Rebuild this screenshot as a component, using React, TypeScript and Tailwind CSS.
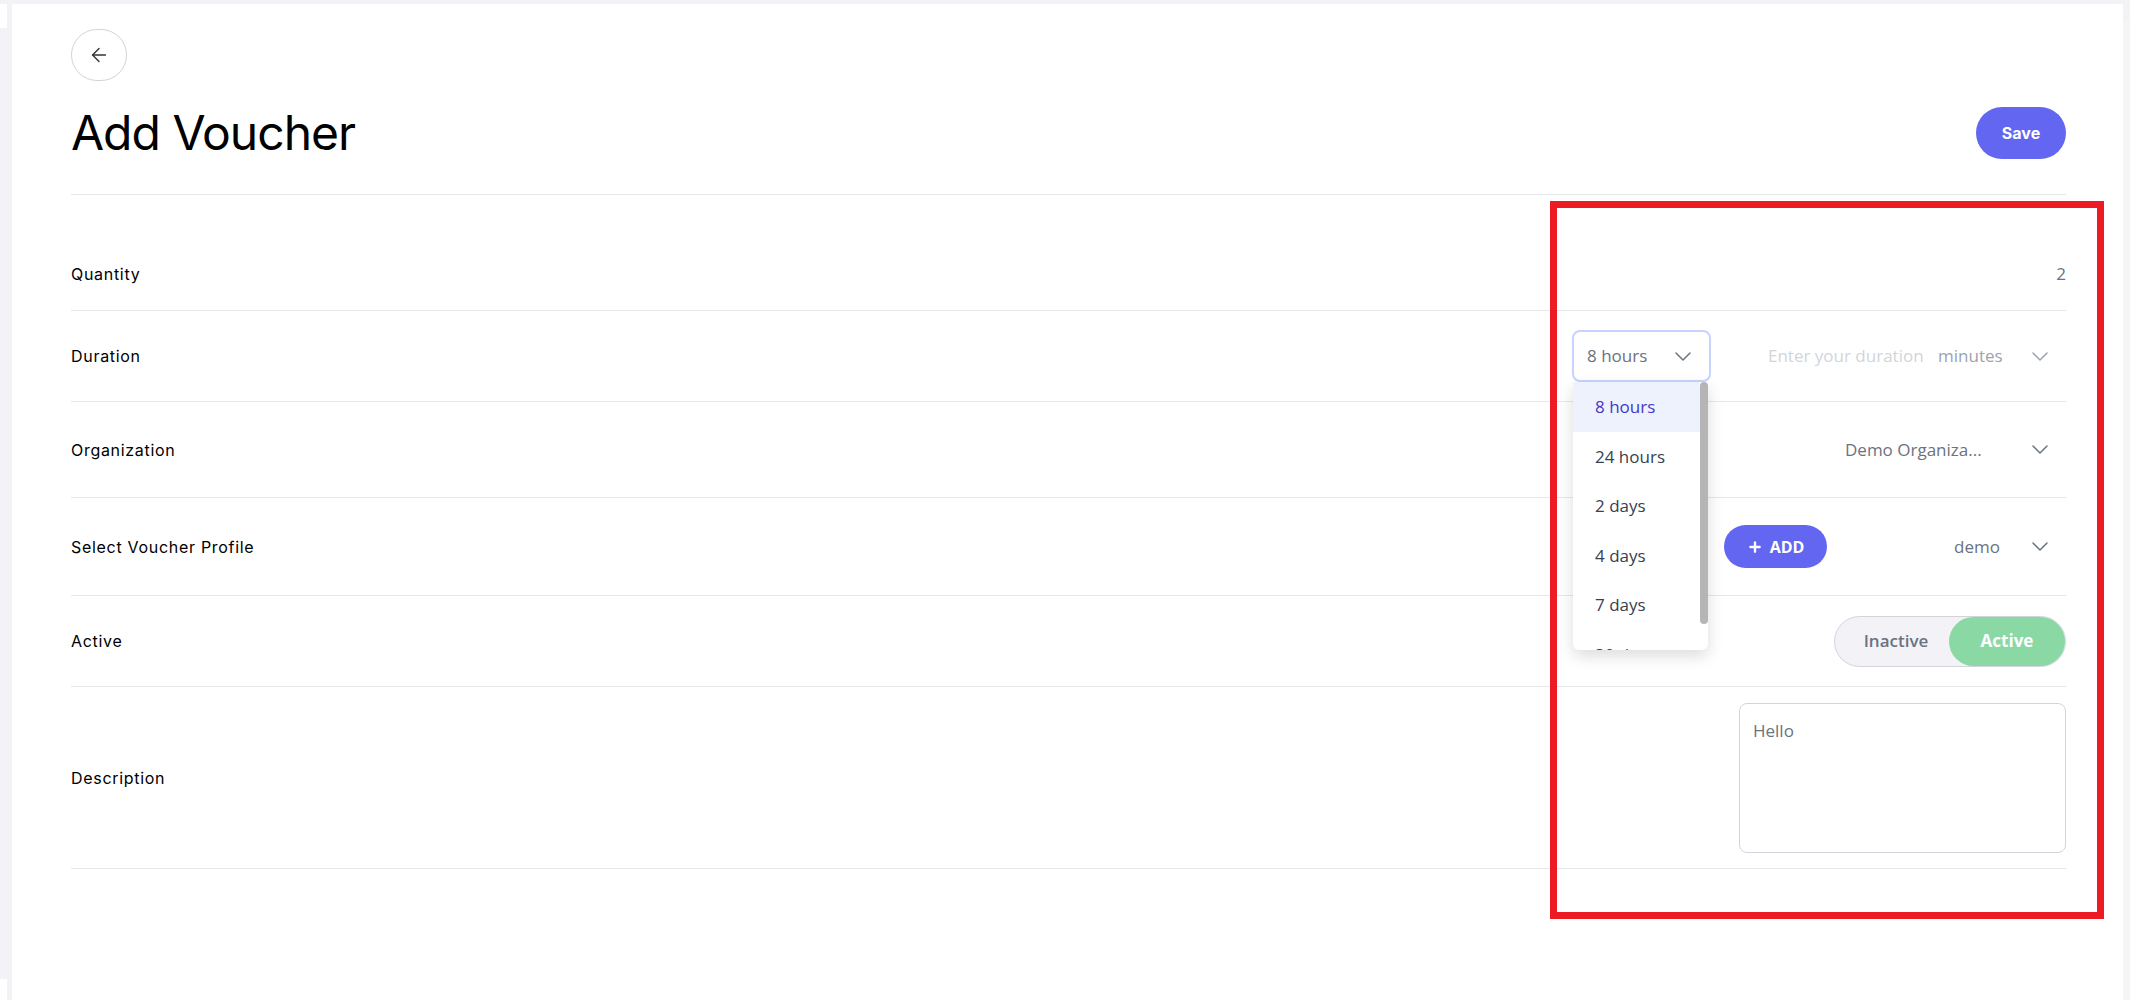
import React from "react";
import { ArrowLeft, Plus } from "lucide-react";

const Chevron = ({ className = "" }: { className?: string }) => (
  <svg width="16" height="9" viewBox="0 0 16 9" fill="none" className={className}>
    <path d="M1 1l7 7 7-7" stroke="currentColor" strokeWidth="1.5" strokeLinecap="round" strokeLinejoin="round" />
  </svg>
);

const options = ["8 hours", "24 hours", "2 days", "4 days", "7 days", "30 days"];

const Row = ({ label, height, children }: { label: string; height: string; children: React.ReactNode }) => (
  <div className={`flex items-center justify-between border-b border-[#e5e7eb] ${height}`}>
    <span className="font-['Inter',sans-serif] text-[16px] font-normal tracking-[0.7px] text-black">{label}</span>
    {children}
  </div>
);

const App = () => {
  return (
    <div className="relative flex h-[1000px] w-[2130px] overflow-hidden bg-[#f2f2f7] font-['Inter',sans-serif]">
      <div className="flex w-[12px] flex-col pt-[4px]">
        <div className="h-[24px] w-[7px] bg-white"></div>
        <div className="flex-1"></div>
        <div className="h-[21px] w-[7px] bg-white"></div>
      </div>

      <main className="mt-[4px] flex-1 bg-white pl-[59px] pr-[57px] pt-[25px]">
        <button className="flex h-[52px] w-[56px] items-center justify-center rounded-full border border-[#d4d4d8] text-[#333]">
          <ArrowLeft size={22} strokeWidth={1.5} />
        </button>

        <div className="mt-[26px] flex h-[52px] items-center justify-between">
          <h1 className="text-[48px] font-normal leading-none tracking-[-1px] text-black">Add Voucher</h1>
          <button className="h-[52px] w-[90px] rounded-full bg-[#6366f1] text-[16px] font-bold text-white">Save</button>
        </div>
        <div className="mt-[35px] h-px bg-[#e5e7eb]"></div>

        <div className="mt-[43px] font-['Open_Sans',sans-serif]">
          <Row label="Quantity" height="h-[73px]">
            <span className="text-[17px] text-[#6b7280]">2</span>
          </Row>

          <Row label="Duration" height="h-[91px]">
            <div className="flex items-center">
              <div className="relative flex h-[52px] w-[139px] items-center justify-between rounded-[8px] border-2 border-[#c7d2fe] pl-[13px] pr-[18px]">
                <span className="text-[17px] text-[#6b7280]">8 hours</span>
                <Chevron className="text-[#6b7280]" />
                <div className="absolute left-[-1px] top-[50px] z-10 flex h-[268px] w-[135px] overflow-hidden rounded-b-[6px] bg-white shadow-[0_6px_16px_rgba(0,0,0,0.14)]">
                  <ul className="w-[127px]">
                    {options.map((o, i) => (
                      <li
                        key={o}
                        className={`flex h-[49.5px] items-center pl-[22px] text-[17px] ${
                          i === 0 ? "bg-[#eef2fd] text-[#4338ca]" : "text-[#374151]"
                        }`}
                      >
                        {o}
                      </li>
                    ))}
                  </ul>
                  <div className="w-[8px]">
                    <div className="h-[242px] w-[8px] rounded-full bg-[#b5b5b5]"></div>
                  </div>
                </div>
              </div>
              <span className="ml-[57px] w-[157px] whitespace-nowrap text-[17px] text-[#d1d5db]">Enter your duration</span>
              <span className="ml-[13px] w-[65px] whitespace-nowrap text-[17px] text-[#9ca3af]">minutes</span>
              <Chevron className="ml-[29px] mr-[18px] text-[#9ca3af]" />
            </div>
          </Row>

          <Row label="Organization" height="h-[96px]">
            <div className="flex items-center">
              <span className="w-[152px] whitespace-nowrap text-[17px] text-[#6b7280]">Demo Organiza...</span>
              <Chevron className="ml-[35px] mr-[18px] text-[#6b7280]" />
            </div>
          </Row>

          <Row label="Select Voucher Profile" height="h-[98px]">
            <div className="flex items-center">
              <button className="flex h-[43px] w-[103px] items-center justify-center gap-[7px] rounded-full bg-[#6366f1] text-[16px] font-bold text-white">
                <Plus size={16} strokeWidth={3.5} />
                <span>ADD</span>
              </button>
              <span className="ml-[127px] w-[52px] text-[17px] text-[#6b7280]">demo</span>
              <Chevron className="ml-[26px] mr-[18px] text-[#6b7280]" />
            </div>
          </Row>

          <Row label="Active" height="h-[91px]">
            <div className="flex h-[51px] w-[232px] rounded-full border border-[#d1d5db] bg-[#f2f2f7]">
              <span className="flex flex-1 items-center justify-center pl-[8px] text-[17px] font-semibold text-[#6b7280]">Inactive</span>
              <span className="flex w-[116px] items-center justify-center rounded-full bg-[#8ad9a5] text-[17px] font-bold text-white">Active</span>
            </div>
          </Row>

          <Row label="Description" height="h-[182px]">
            <div className="h-[150px] w-[327px] rounded-[8px] border border-[#d1d5db] px-[13px] pt-[14px] text-[17px] text-[#6b7280]">
              Hello
            </div>
          </Row>
        </div>
      </main>

      <div className="mt-[21px] w-[7px] bg-[#f5f5f5]"></div>

      <div className="pointer-events-none absolute left-[1550px] top-[201px] h-[718px] w-[554px] border-[7px] border-[#ed1c24]"></div>
    </div>
  );
};

export default App;
